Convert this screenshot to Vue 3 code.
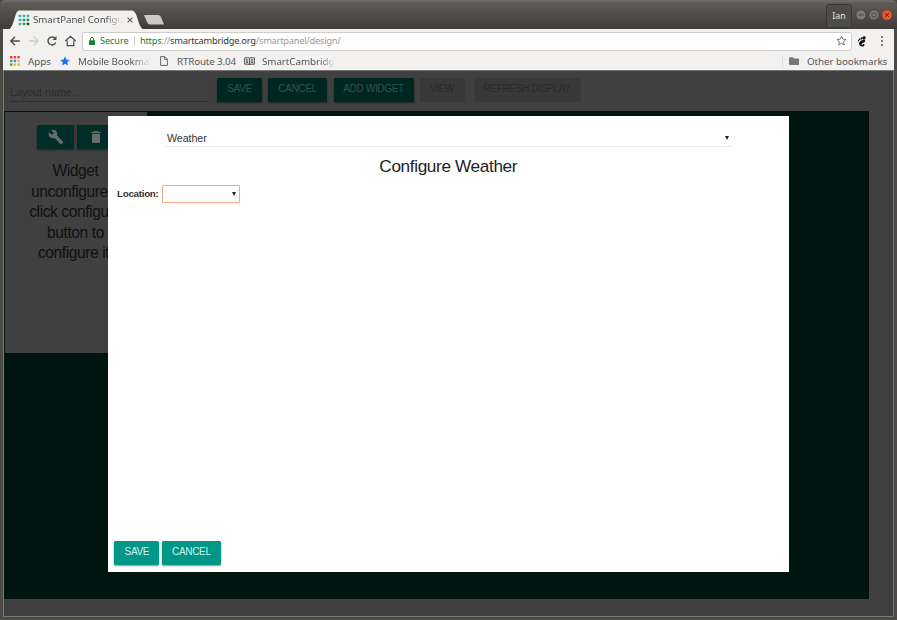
<script setup>
const dots = ['#2fb5b5', '#2fb5b5', '#3cb6a0', '#2fb5b5', '#2a9d5c', '#2a8a4c', '#3fb8b0', '#2a9d5c', '#1c4a40']
const apps = ['#ea4335', '#ea4335', '#ea4335', '#34a853', '#4285f4', '#fbbc05', '#34a853', '#fbbc05', '#fbbc05']
</script>

<template>
  <div class="window">
    <header class="titlebar">
      <div class="tab">
        <svg class="tab-shape" width="160" height="20" viewBox="0 0 160 20">
          <path d="M0 20C3 17 4 13 6 7Q7.500 .5 10 .5H123Q126 .5 128 7C130 13 131 18 135 20Z" fill="#f2f1f0" />
          <path d="M136 5H150Q152 5 153 7L156 14.500H142Q140 14.500 139 12Z" fill="#cbc9c6" transform="translate(-1 0)" />
        </svg>
        <svg class="favicon" width="12" height="12" viewBox="0 0 12 12">
          <rect v-for="(c, i) in dots" :key="i" :x=".7 + (i % 3) * 4" :y=".7 + Math.floor(i / 3) * 4" width="2.500" height="2.500" rx=".6" :fill="c" />
        </svg>
        <span class="tab-title">SmartPanel Configu</span>
        <svg class="close" width="6" height="6" viewBox="0 0 6 6"><path d="M.6.6l4.800 4.800M5.400.6L.6 5.400" stroke="#666" stroke-width="1.200" /></svg>
      </div>
      <div class="controls">
        <span class="user">Ian</span>
        <svg width="38" height="12" viewBox="0 0 38 12">
          <circle cx="6" cy="6" r="5" fill="#7d7b75" stroke="#403f3a" stroke-width=".6" />
          <path d="M3.500 6h5" stroke="#45443f" />
          <circle cx="19" cy="6" r="5" fill="#7d7b75" stroke="#403f3a" stroke-width=".6" />
          <path d="M17 4h4v4h-4z" stroke="#45443f" fill="none" stroke-width=".8" />
          <circle cx="32" cy="6" r="5.200" fill="#ed562b" stroke="#403f3a" stroke-width=".5" />
          <path d="M30 4l4 4M34 4l-4 4" stroke="#54382c" />
        </svg>
      </div>
    </header>

    <div class="toolbar">
      <svg class="nav" width="70" height="14" viewBox="0 0 70 14" fill="none" stroke="#4e4e4e" stroke-width="1.400">
        <path d="M12.800 7H4M8 2.800L3.800 7 8 11.200" />
        <path d="M22 7h8.800M26.800 2.800L31 7l-4.200 4.200" stroke="#cdcdcd" />
        <path d="M48.200 4.500A4 4 0 1 0 48.700 8.500" />
        <path d="M49.500 2v4h-4z" fill="#4e4e4e" stroke="none" />
        <path d="M58.300 7L63.500 2.300 68.700 7M60.200 6.500v5.100h2.100m2.400 0h2.100V6.500M60.200 11.600h6.600" stroke-width="1.200" />
      </svg>
      <div class="address">
        <svg width="6" height="8" viewBox="0 0 6 8"><path d="M0 3.200h6V8H0z" fill="#188038" /><path d="M1.400 3.500V2a1.600 1.600 0 0 1 3.200 0v1.500" stroke="#188038" fill="none" /></svg>
        <span class="secure">Secure</span>
        <i class="bar"></i>
        <span class="url"><b>https</b>://<em>smartcambridge.org</em>/smartpanel/design/</span>
        <svg class="star" width="11" height="11" viewBox="0 0 24 24"><path d="M12 2.500l2.900 6.600 7.100.7-5.400 4.700 1.600 7L12 17.800l-6.200 3.700 1.600-7L2 9.800l7.100-.7z" fill="none" stroke="#666" stroke-width="1.900" /></svg>
      </div>
      <svg class="foot" width="10" height="11" viewBox="0 0 10 11" fill="#111">
        <ellipse cx="7" cy="1.900" rx="1.600" ry="1.700" transform="rotate(25 7 1.900)" />
        <ellipse cx="4.500" cy="2.400" rx=".8" ry="1.200" /><ellipse cx="2.800" cy="3.200" rx=".7" ry="1" /><ellipse cx="1.500" cy="4.500" rx=".6" ry=".9" />
        <path d="M8 4.200C5.500 3.500 1.800 5 2 7.600c.2 2.500 2.600 3.500 4.300 2.800C8 9.600 7.800 7.800 6.600 8c-.8.200-.8 1-1.600.8-1-.2-.7-1.200.3-1.600 1.500-.5 3.700-1.200 2.700-3z" />
      </svg>
      <svg class="more" width="4" height="12" viewBox="0 0 4 12" fill="#555"><circle cx="2" cy="2" r="1" /><circle cx="2" cy="6" r="1" /><circle cx="2" cy="10" r="1" /></svg>
    </div>

    <nav class="bookmarks">
      <svg class="apps" width="10" height="10" viewBox="0 0 10 10">
        <rect v-for="(c, i) in apps" :key="i" :x="(i % 3) * 3.700" :y="Math.floor(i / 3) * 3.700" width="2.400" height="2.400" :fill="c" />
      </svg>
      <span class="bm-apps">Apps</span>
      <svg class="bm-star" width="10" height="10" viewBox="0 0 24 24"><path d="M12 1l3.200 7.600 8.300.7-6.300 5.400 1.900 8.100L12 18.500l-7.100 4.300 1.900-8.100L.5 9.300l8.300-.7z" fill="#1a73e8" /></svg>
      <span class="bm-mobile">Mobile Bookma</span>
      <svg class="bm-file" width="8" height="10" viewBox="0 0 8 10"><path d="M.6.6h4.200l2.600 2.600v6.200H.6zM4.600.6v2.800h2.800" fill="none" stroke="#666" /></svg>
      <span class="bm-route">RTRoute 3.04</span>
      <svg class="bm-book" width="11" height="9" viewBox="0 0 11 9"><path d="M.6.8H5l.5.5.5-.5h4.400v6.400H6l-.5.8-.5-.8H.6zM5.500 1.300V8M1.800 2.800h2.400M1.800 4.200h2.400M1.800 5.600h2.400M6.800 2.800h2.400M6.800 4.200h2.400M6.800 5.600h2.400" fill="none" stroke="#444" stroke-width=".9" /></svg>
      <span class="bm-smart">SmartCambridg</span>
      <i class="divider"></i>
      <svg class="folder" width="10" height="8" viewBox="0 0 10 8"><path d="M0 1Q0 .3.700.3H4L5 1.400h4.300q.7 0 .7.700V7.300q0 .7-.7.700H.7Q0 8 0 7.300z" fill="#777" /></svg>
      <span class="other">Other bookmarks</span>
    </nav>

    <main class="page">
      <div class="actions">
        <div class="layout-name">Layout name...</div>
        <button class="btn dim save">SAVE</button>
        <button class="btn dim cancel">CANCEL</button>
        <button class="btn dim add">ADD WIDGET</button>
        <button class="btn off view">VIEW</button>
        <button class="btn off refresh">REFRESH DISPLAY</button>
      </div>
      <section class="board">
        <article class="widget">
          <div class="tools">
            <span class="tool"><svg width="16" height="16" viewBox="0 0 24 24" fill="#666e6b"><path d="M22.700 19l-9.100-9.100c.9-2.300.4-5-1.500-6.900-2-2-5-2.400-7.400-1.300L9 6 6 9 1.600 4.700C.4 7.100.9 10.100 2.900 12.100c1.900 1.900 4.600 2.400 6.900 1.500l9.100 9.100c.4.400 1 .4 1.400 0l2.300-2.300c.5-.4.5-1.100.1-1.400z" /></svg></span>
            <span class="tool"><svg width="16" height="16" viewBox="0 0 24 24" fill="#666e6b"><path d="M6 19c0 1.100.9 2 2 2h8c1.100 0 2-.9 2-2V7H6v12zM19 4h-3.500l-1-1h-5l-1 1H5v2h14V4z" /></svg></span>
          </div>
          <p>Widget<br>unconfigured,<br>click configure<br>button to<br>configure it.</p>
        </article>
      </section>

      <div class="modal">
        <div class="type">Weather<i class="arrow"></i></div>
        <h1>Configure Weather</h1>
        <div class="field"><label>Location:</label><div class="select"><i class="arrow"></i></div></div>
        <footer>
          <button class="btn save">SAVE</button>
          <button class="btn cancel">CANCEL</button>
        </footer>
      </div>
    </main>
  </div>
</template>

<style>
body { margin: 0; overflow: hidden; background: #4b4a46; }
</style>

<style scoped>
* { box-sizing: border-box; }
svg { display: block; flex: none; }
.window { width: 897px; height: 620px; padding: 0 3px 3px; display: flex; flex-direction: column; background: #4b4a45; border-radius: 5px 5px 0 0; font-family: "Noto Sans", sans-serif; color: #555; overflow: hidden; }
.titlebar { height: 29px; margin: 0 -3px; padding: 0 4px 0 9px; display: flex; justify-content: space-between; background: linear-gradient(#5f5d56, #3d3c38); border-top: 2px solid #6a696a; flex: none; }
.tab { position: relative; width: 160px; height: 19px; margin-top: 8px; padding-left: 9px; display: flex; align-items: center; }
.tab-shape { position: absolute; left: 0; top: 0; }
.favicon { position: relative; margin-top: 1px; }
.tab-title { position: relative; margin-left: 3px; width: 91px; white-space: nowrap; font-size: 9.700px; letter-spacing: -.03px; color: #4c4c4c; mask-image: linear-gradient(90deg, #000 72px, transparent 90px); }
.close { position: relative; margin-left: 3px; }
.controls { display: flex; align-items: center; gap: 2px; height: 26px; }
.user { width: 26px; height: 24px; margin: 1px 1px 0 -1px; display: flex; align-items: center; justify-content: center; border: 1px solid #393834; border-radius: 3px; background: #4d4c47; color: #e5e3de; font-size: 8.800px; }
.toolbar { height: 24px; display: flex; align-items: center; background: #f2f1f0; flex: none; }
.nav { margin-left: 4px; }
.address { margin-left: 5px; width: 770px; height: 19px; padding: 0 4px 1px 6px; border: 1px solid #cfcecc; border-radius: 2px; background: #fff; display: flex; align-items: center; font-size: 9.500px; }
.secure { margin-left: 5px; width: 30px; color: #188038; font-size: 9.200px; letter-spacing: -.1px; }
.bar { width: 1px; height: 9px; margin: 0 5px 0 4px; background: #ccc; }
.url { color: #999; font-size: 9.300px; letter-spacing: -.25px; white-space: nowrap; }
.url b { font-weight: 400; color: #188038; }
.url em { font-style: normal; color: #333; }
.star { margin-left: auto; }
.foot { margin-left: 5px; }
.more { margin-left: 13px; }
.bookmarks { height: 17px; padding-bottom: 1px; flex: none; display: flex; align-items: center; background: #f2f1f0; font-size: 9.800px; letter-spacing: -.06px; white-space: nowrap; }
.apps { margin-left: 7px; }
.bm-apps { margin-left: 8px; width: 24px; }
.bm-star { margin-left: 8px; }
.bm-mobile { margin-left: 8px; width: 73px; mask-image: linear-gradient(90deg, #000 54px, transparent 73px); }
.bm-file { margin-left: 9px; }
.bm-route { margin-left: 9px; width: 60px; letter-spacing: -.15px; }
.bm-book { margin-left: 7px; }
.bm-smart { margin-left: 7px; width: 72px; mask-image: linear-gradient(90deg, #000 58px, transparent 73px); }
.divider { margin-left: auto; width: 1px; height: 11px; background: #ddd; }
.folder { margin-left: 6px; }
.other { margin-left: 8px; width: 80px; margin-right: 7px; }
.page { position: relative; flex: 1; min-height: 0; border: 1px solid #777; border-left-color: #7a7a78; background: #404040; font-family: "Liberation Sans", Arial, sans-serif; }
.actions { height: 40px; display: flex; padding: 7px 0 0 6px; }
.layout-name { width: 198px; height: 24px; padding-top: 8px; border-bottom: 1px solid #561f1f; font-size: 10.700px; line-height: 13px; color: #2c2c2c; }
.btn { display: block; height: 24px; padding: 0 0 4px; border: 0; border-radius: 1.500px; background: #009688; color: #d8efec; font: 10px "Liberation Sans", Arial, sans-serif; letter-spacing: -.33px; text-align: center; box-shadow: 0 1px 2px rgba(0, 0, 0, .45); flex: none; }
.save { width: 45px; }
.cancel { width: 59px; }
.dim { background: #002622; color: #36504b; }
.dim.save { margin-left: 9px; }
.dim.cancel { margin-left: 6px; }
.add { width: 80px; margin-left: 6.500px; }
.off { background: #393939; color: #2b2b2b; box-shadow: none; }
.view { width: 45px; margin-left: 6px; }
.refresh { width: 107px; margin-left: 9px; }
.board { width: 865px; height: 488px; background: #001410; }
.widget { width: 143px; height: 243px; background: #404040; border: 1px solid #001410; border-right: 0; padding: 13px 0 0; }
.tools { display: flex; gap: 3px; padding-left: 32.400px; }
.tool { width: 37px; height: 24px; display: flex; align-items: center; justify-content: center; background: #002d27; border-radius: 1px; box-shadow: 0 1px 2px #222; }
.widget p { margin: 12px 0 0 -1px; text-align: center; color: #101010; font-size: 15.600px; letter-spacing: -.42px; line-height: 20.500px; }
.modal { position: absolute; left: 104px; top: 45px; width: 681px; height: 456px; padding: 14px 7px 7px 6.500px; background: #fff; display: flex; flex-direction: column; color: #333; }
.type { width: 567px; height: 17px; margin-left: 50.500px; padding: 0 3px 1px 2px; display: flex; align-items: center; justify-content: space-between; border-bottom: 1px solid #eaeaea; font-size: 10.700px; letter-spacing: -.08px; }
.arrow { width: 0; height: 0; border: 2px solid transparent; border-top: 4px solid #222; border-bottom: 0; }
h1 { margin: 9px 0 0; text-align: center; font-size: 17.200px; letter-spacing: -.36px; line-height: 21px; font-weight: 400; color: #222; }
.field { display: flex; align-items: center; margin: 8px 0 0 2.500px; height: 18px; }
.field label { width: 45px; font-size: 9.900px; letter-spacing: -.32px; font-weight: 700; padding-bottom: 1px; }
.select { width: 78px; height: 18px; padding-right: 3px; display: flex; justify-content: flex-end; align-items: center; border: 1px solid #f3a98a; border-radius: 1px; }
.modal footer { margin-top: auto; display: flex; gap: 2.500px; margin-left: -.1px; }
</style>
